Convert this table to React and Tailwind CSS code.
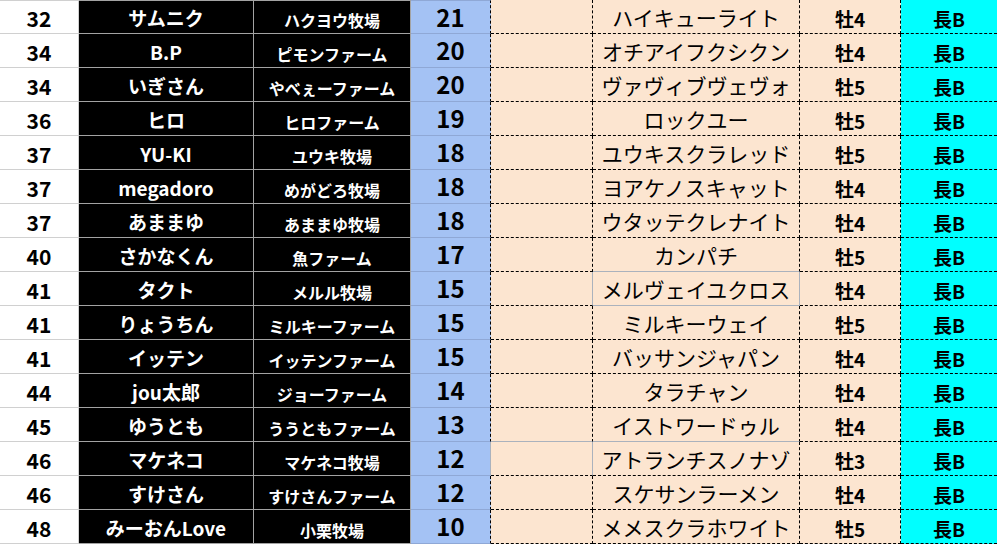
import React from "react";

const rows = [
  ["32", "サムニク", "ハクヨウ牧場", "21", "ハイキューライト", "牡4"],
  ["34", "B.P", "ピモンファーム", "20", "オチアイフクシクン", "牡4"],
  ["34", "いぎさん", "やべぇーファーム", "20", "ヴァヴィブヴェヴォ", "牡5"],
  ["36", "ヒロ", "ヒロファーム", "19", "ロックユー", "牡5"],
  ["37", "YU-KI", "ユウキ牧場", "18", "ユウキスクラレッド", "牡5"],
  ["37", "megadoro", "めがどろ牧場", "18", "ヨアケノスキャット", "牡4"],
  ["37", "あままゆ", "あままゆ牧場", "18", "ウタッテクレナイト", "牡4"],
  ["40", "さかなくん", "魚ファーム", "17", "カンパチ", "牡5"],
  ["41", "タクト", "メルル牧場", "15", "メルヴェイユクロス", "牡4"],
  ["41", "りょうちん", "ミルキーファーム", "15", "ミルキーウェイ", "牡5"],
  ["41", "イッテン", "イッテンファーム", "15", "バッサンジャパン", "牡4"],
  ["44", "jou太郎", "ジョーファーム", "14", "タラチャン", "牡4"],
  ["45", "ゆうとも", "ううともファーム", "13", "イストワードゥル", "牡4"],
  ["46", "マケネコ", "マケネコ牧場", "12", "アトランチスノナゾ", "牡3"],
  ["46", "すけさん", "すけさんファーム", "12", "スケサンラーメン", "牡4"],
  ["48", "みーおんLove", "小栗牧場", "10", "メメスクラホワイト", "牡5"],
];

function Row({ r, i }) {
  const first = i === 0;
  const gray6Bottom = i === 7 || i === 8 || i === 12;
  const gray5Bottom = i === 12;
  const gray5Right = i === 8 || i === 13;
  const gray4Right = i === 13;
  const gray6Right = i === 8;
  return (
    <div className="flex h-[34px]">
      <div
        className={`w-[79px] shrink-0 bg-white border-r border-b border-[#d0d0d0] flex items-center justify-center pt-[3px] text-[21px] font-bold text-black ${first ? "border-t" : ""}`}
      >
        {r[0]}
      </div>
      <div
        className={`w-[175px] shrink-0 bg-black border-r border-b border-[#a3a3a3] flex items-center justify-center pt-[2px] text-[19px] font-bold text-white ${first ? "border-t" : ""}`}
      >
        {r[1]}
      </div>
      <div
        className={`w-[157px] shrink-0 bg-black border-r border-b border-[#a3a3a3] flex items-center justify-center pt-[6px] text-[16px] font-bold text-white ${first ? "border-t" : ""}`}
      >
        {r[2]}
      </div>
      <div
        className={`w-[80px] shrink-0 bg-[#a4c2f4] border-b border-b-[#8fa8d6] border-r ${gray4Right ? "border-r-[#aab2bd]" : "border-r-black [border-right-style:dashed]"} flex items-center justify-center pb-[1px] text-[24px] font-bold text-black ${first ? "border-t border-t-[#8fa8d6]" : ""}`}
      >
        {r[3]}
      </div>
      <div
        className={`w-[102px] shrink-0 bg-[#fce5d0] border-r border-b ${gray5Bottom ? "border-b-[#aab2bd]" : "border-b-black [border-bottom-style:dashed]"} ${gray5Right ? "border-r-[#aab2bd]" : "border-r-black [border-right-style:dashed]"}`}
      />
      <div
        className={`w-[207px] shrink-0 bg-[#fce5d0] border-r border-b ${gray6Bottom ? "border-b-[#aab2bd]" : "border-b-black [border-bottom-style:dashed]"} ${gray6Right ? "border-r-[#aab2bd]" : "border-r-black [border-right-style:dashed]"} flex items-center justify-center pt-[2px] text-[21px] text-black`}
      >
        {r[4]}
      </div>
      <div className="w-[101px] shrink-0 bg-[#fce5d0] border-r border-b border-black [border-right-style:dashed] [border-bottom-style:dashed] flex items-center justify-center pt-[4px] text-[19px] font-bold text-black">
        {r[5]}
      </div>
      <div className="w-[96px] shrink-0 bg-[#00ffff] border-b border-black [border-bottom-style:dashed] flex items-center justify-center pt-[4px] text-[19px] font-bold text-black">
        長B
      </div>
    </div>
  );
}

export default function App() {
  return (
    <div className="w-[997px] h-[545px] overflow-hidden bg-white leading-tight font-['Noto_Sans_CJK_JP','Noto_Sans',sans-serif]">
      {rows.map((r, i) => (
        <Row key={i} r={r} i={i} />
      ))}
    </div>
  );
}
